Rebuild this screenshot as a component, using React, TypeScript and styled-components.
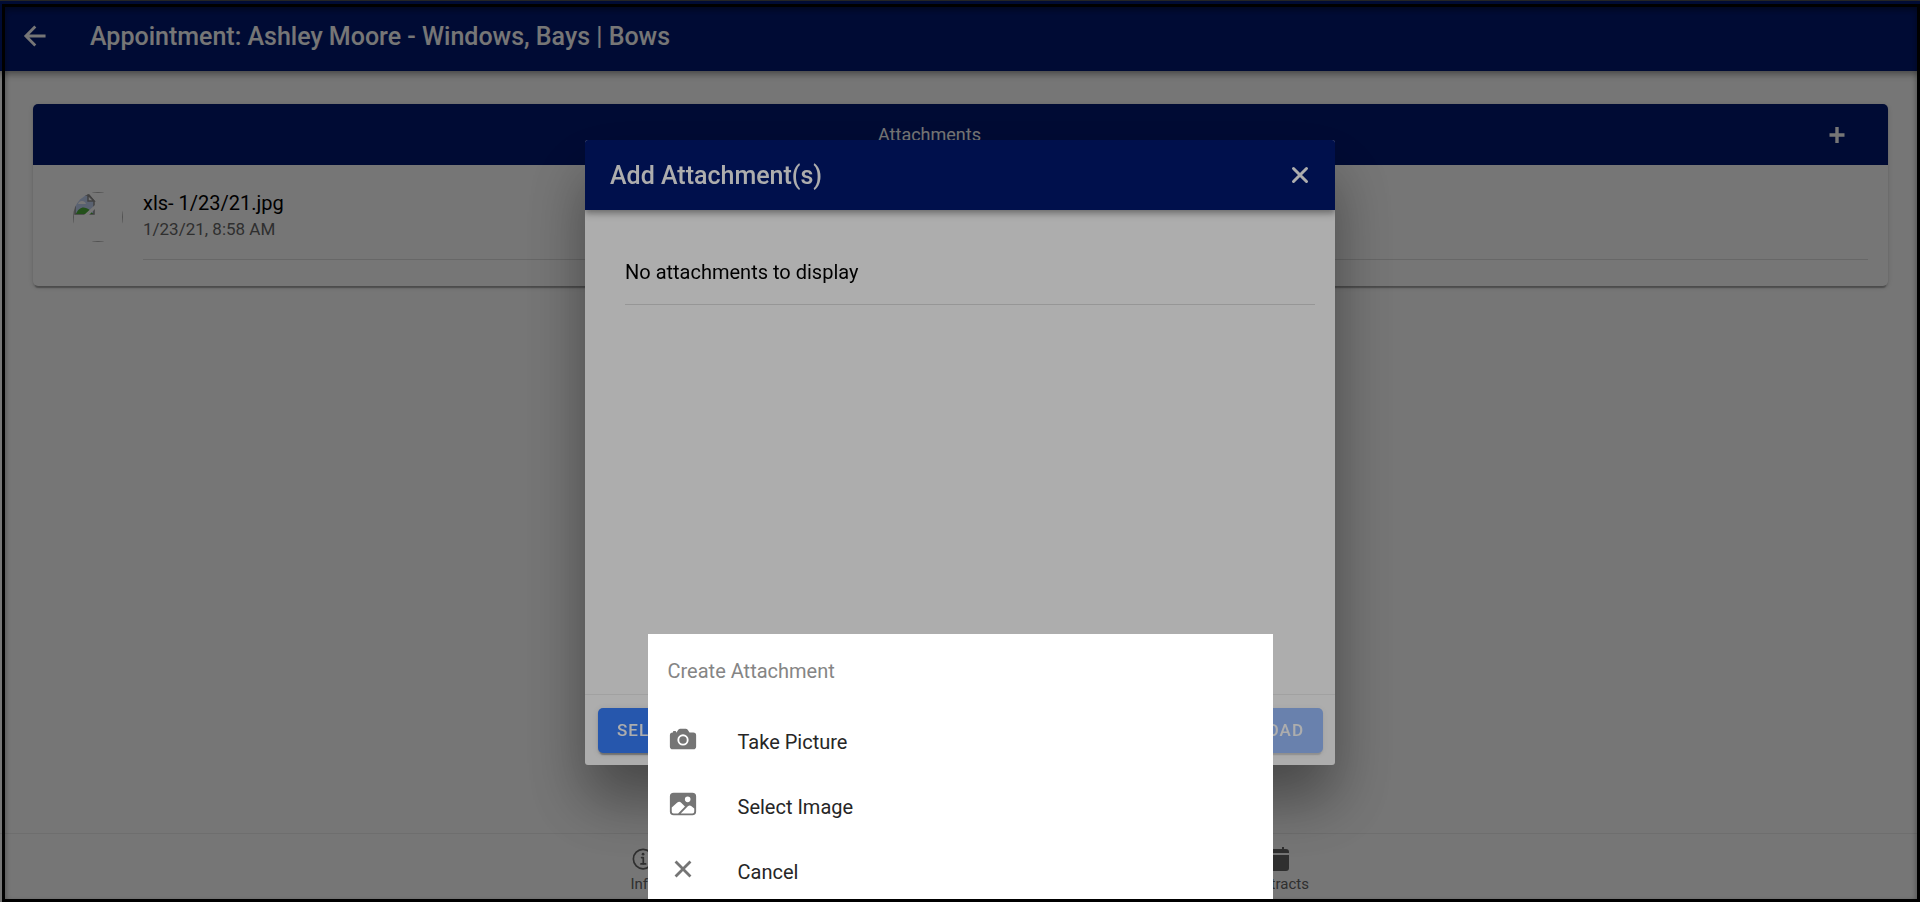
import React from "react";
import styled, { createGlobalStyle } from "styled-components";
import { IoArrowBackSharp, IoCamera, IoCloseSharp, IoImage, IoInformationCircleOutline } from "react-icons/io5";

const navy = "#001871";

const GlobalStyle = createGlobalStyle`
  *, *::before, *::after { box-sizing: border-box; }
  body {
    margin: 0;
    overflow: hidden;
    background: #fff;
    color: #000;
    font-family: Roboto, "Liberation Sans", sans-serif;
    -webkit-font-smoothing: antialiased;
  }
  h1, h2, h3, p, ul { margin: 0; padding: 0; font-weight: 400; }
  button { font-family: inherit; border: 0; background: none; padding: 0; cursor: pointer; }
`;

const Page = styled.div`
  height: 100vh;
  display: flex;
  flex-direction: column;
  border-top: 1px solid #5a5a5a;
`;

const elevation = "0 2px 5px rgba(0, 0, 0, 0.2), 0 5px 6px rgba(0, 0, 0, 0.14), 0 1px 12px rgba(0, 0, 0, 0.12)";

const Toolbar = styled.header`
  flex: none;
  height: 70px;
  padding: 0 20px;
  display: flex;
  align-items: center;
  background: ${navy};
  color: #fff;
  box-shadow: ${elevation};
`;

const ModalToolbar = styled(Toolbar)`
  padding-left: 25px;
`;

const ToolbarTitle = styled.h1`
  flex: 1;
  padding-top: 2px;
  font-size: 25px;
  font-weight: 500;
  line-height: 30px;
  white-space: nowrap;
`;

const IconButton = styled.button`
  display: flex;
  color: inherit;
  svg { width: 30px; height: 30px; }
`;

const BackButton = styled(IconButton)`
  width: 70px;
`;

const Content = styled.main`
  flex: 1;
  padding: 33px 32px 33px 33px;
`;

const Card = styled.section`
  border-radius: 5px;
  overflow: hidden;
  box-shadow: 0 4px 1px -2px rgba(0, 0, 0, 0.2), 0 2px 2px rgba(0, 0, 0, 0.14), 0 1px 6px rgba(0, 0, 0, 0.12);
`;

const CardHeader = styled.div`
  height: 61px;
  padding: 0 36px 0 4px;
  display: flex;
  align-items: center;
  background: ${navy};
  color: #fff;
`;

const CardTitle = styled.h2`
  flex: 1;
  text-align: center;
  font-size: 18px;
  line-height: 20px;
`;

const FileList = styled.ul`
  list-style: none;
  padding: 10px 20px 26px 40px;
`;

const FileRow = styled.li`
  display: flex;
  gap: 20px;
`;

const Thumb = styled.svg`
  flex: none;
  width: 50px;
  height: 50px;
  margin-top: 17px;
`;

const FileText = styled.div`
  flex: 1;
  padding: 15px 0 18px;
  border-bottom: 1px solid #dedede;
`;

const FileName = styled.h3`
  font-size: 20px;
  line-height: 27px;
`;

const FileDate = styled.p`
  color: #666;
  font-size: 17px;
  line-height: 24px;
`;

const TabBar = styled.nav`
  flex: none;
  height: 69px;
  display: flex;
  justify-content: center;
  gap: 523px;
  border-top: 1px solid #ededed;
`;

const Tab = styled.a`
  width: 110px;
  padding-top: 12px;
  display: flex;
  flex-direction: column;
  align-items: center;
  color: #666;
  font-size: 15px;
  line-height: 22px;
  text-decoration: none;
  svg { width: 27px; height: 27px; }
`;

const Overlay = styled.div`
  position: fixed;
  inset: 0;
  display: flex;
  justify-content: center;
  align-items: center;
  padding-top: 3px;
  background: rgba(0, 0, 0, 0.32);
`;

const SheetOverlay = styled(Overlay)`
  align-items: flex-end;
`;

const Modal = styled.div`
  width: 750px;
  height: 625px;
  display: flex;
  flex-direction: column;
  border-radius: 3px;
  overflow: hidden;
  background: #fff;
  box-shadow: 0 35px 60px rgba(0, 0, 0, 0.4);
`;

const ModalBody = styled.div`
  flex: 1;
  padding: 30px 20px 0 40px;
`;

const EmptyNote = styled.p`
  padding: 19px 0 18px;
  border-bottom: 1px solid #dedede;
  font-size: 20px;
  line-height: 27px;
`;

const ModalFooter = styled.footer`
  height: 71px;
  padding: 0 12px 0 13px;
  display: flex;
  justify-content: space-between;
  align-items: center;
  border-top: 1px solid #ededed;
`;

const ActionButton = styled.button`
  height: 45px;
  padding: 0 19px;
  border-radius: 5px;
  background: #3880ff;
  color: #fff;
  font-size: 17px;
  font-weight: 500;
  letter-spacing: 1px;
  text-transform: uppercase;
  box-shadow: 0 4px 1px -2px rgba(0, 0, 0, 0.2), 0 2px 2px rgba(0, 0, 0, 0.14), 0 1px 6px rgba(0, 0, 0, 0.12);
  &:disabled { opacity: 0.5; }
`;

const Sheet = styled.div`
  position: relative;
  width: 625px;
  background: #fff;
`;

const SheetTitle = styled.h2`
  padding: 25px 20px 23px;
  color: #858585;
  font-size: 20px;
  line-height: 25px;
`;

const SheetButton = styled.button`
  width: 100%;
  height: 65px;
  padding: 5px 20px 0;
  display: flex;
  align-items: center;
  gap: 40px;
  color: #262626;
  font-size: 20px;
  line-height: 25px;
  svg { width: 30px; height: 30px; margin-bottom: 6px; color: #757575; }
`;

const Frame = styled.div`
  position: fixed;
  inset: 4px 0 0 2px;
  border: 3px solid #000;
  pointer-events: none;
`;

const FrameShade = styled(Frame)`
  box-shadow: inset 0 3px 6px rgba(0, 0, 0, 0.4);
`;

function BrokenImage() {
  return (
    <Thumb viewBox="0 0 50 50" role="img" aria-label="xls- 1/23/21.jpg">
      <defs>
        <clipPath id="round"><circle cx="25" cy="25" r="25" /></clipPath>
      </defs>
      <g clipPath="url(#round)">
        <rect x="0.5" y="0.5" width="49" height="49" fill="none" stroke="#b0b0b0" />
        <path d="M2 3h14l5 6v13H2z" fill="#c3d3f5" stroke="#8d8d8d" strokeWidth="1.5" />
        <path d="M3 22c3-8 11-9 17 0z" fill="#4cae3a" />
        <path d="M5 12c1-4 7-4 8 0z" fill="#fff" />
        <path d="M15 3v6h6z" fill="#fff" stroke="#8d8d8d" strokeWidth="1.5" />
        <path d="M11 23L22 13v4l-6 6z" fill="#fff" />
      </g>
    </Thumb>
  );
}

function PlusIcon() {
  return (
    <svg viewBox="0 0 30 30" fill="none" stroke="currentColor" strokeWidth="3.4" aria-hidden="true">
      <path d="M15 7v16M7.5 15h15" strokeLinejoin="round" />
    </svg>
  );
}

function CloseIcon() {
  return (
    <svg viewBox="0 0 30 30" fill="none" stroke="currentColor" strokeWidth="3" strokeLinecap="round" aria-hidden="true">
      <path d="M8.5 8.5l13 13M21.5 8.5l-13 13" />
    </svg>
  );
}

function ContractsIcon() {
  return (
    <svg viewBox="0 0 27 27" fill="currentColor" aria-hidden="true">
      <path d="M4 3h2V1h2v2h11V1h2v2h2a3 3 0 0 1 3 3v1H1V6a3 3 0 0 1 3-3z" />
      <path d="M1 9h25v13a3 3 0 0 1-3 3H4a3 3 0 0 1-3-3z" />
    </svg>
  );
}

export default function App() {
  return (
    <>
      <GlobalStyle />
      <Page>
        <Toolbar>
          <BackButton aria-label="Back"><IoArrowBackSharp /></BackButton>
          <ToolbarTitle>Appointment: Ashley Moore - Windows, Bays | Bows</ToolbarTitle>
        </Toolbar>
        <Content>
          <Card>
            <CardHeader>
              <CardTitle>Attachments</CardTitle>
              <IconButton aria-label="Add attachment"><PlusIcon /></IconButton>
            </CardHeader>
            <FileList>
              <FileRow>
                <BrokenImage />
                <FileText>
                  <FileName>xls- 1/23/21.jpg</FileName>
                  <FileDate>1/23/21, 8:58 AM</FileDate>
                </FileText>
              </FileRow>
            </FileList>
          </Card>
        </Content>
        <TabBar>
          <Tab href="#info"><IoInformationCircleOutline />Info</Tab>
          <Tab href="#contracts"><ContractsIcon />Contracts</Tab>
        </TabBar>
      </Page>

      <Overlay>
        <Modal role="dialog" aria-label="Add Attachment(s)">
          <ModalToolbar as="div">
            <ToolbarTitle as="h2">Add Attachment(s)</ToolbarTitle>
            <IconButton aria-label="Close"><CloseIcon /></IconButton>
          </ModalToolbar>
          <ModalBody>
            <EmptyNote>No attachments to display</EmptyNote>
          </ModalBody>
          <ModalFooter>
            <ActionButton>Select</ActionButton>
            <ActionButton disabled>Upload</ActionButton>
          </ModalFooter>
        </Modal>
      </Overlay>

      <SheetOverlay>
        <FrameShade />
        <Sheet role="dialog" aria-label="Create Attachment">
          <SheetTitle>Create Attachment</SheetTitle>
          <SheetButton><IoCamera />Take Picture</SheetButton>
          <SheetButton><IoImage />Select Image</SheetButton>
          <SheetButton><IoCloseSharp />Cancel</SheetButton>
        </Sheet>
      </SheetOverlay>
      <Frame />
    </>
  );
}
